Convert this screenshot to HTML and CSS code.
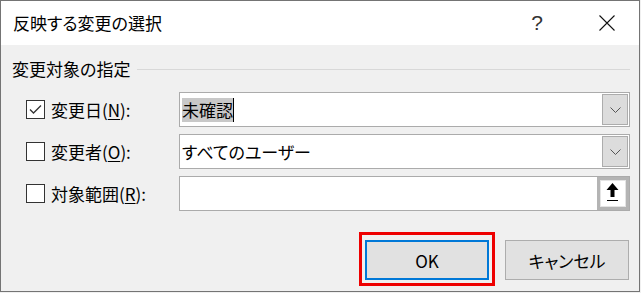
FILE: index.html
```html
<!DOCTYPE html>
<html lang="ja">
<head>
<meta charset="utf-8">
<title>反映する変更の選択</title>
<link rel="stylesheet" href="styles.css">
</head>
<body>
<div class="window">
  <header class="titlebar">
    <span class="title">反映する変更の選択</span>
    <span class="help">?</span>
    <span class="close">
      <svg width="16" height="16" viewBox="0 0 16 16"><path d="M0.5 0.5L15.5 15.5M15.5 0.5L0.5 15.5" stroke="#111" stroke-width="1.1" fill="none"/></svg>
    </span>
  </header>
  <main class="content">
    <div class="group-head">
      <span class="group-label">変更対象の指定</span>
      <span class="rule"></span>
    </div>
    <div class="fields">
      <div class="field">
        <label class="check">
          <span class="box"><svg width="17" height="17" viewBox="0 0 17 17"><path d="M3 8.5L6.5 12L14 4.5" stroke="#333" stroke-width="1.3" fill="none"/></svg></span>
          <span class="label-text">変更日(<u>N</u>):</span>
        </label>
        <div class="combo">
          <span class="value"><span class="sel">未確認</span><span class="caret"></span></span>
          <span class="drop"><svg width="11" height="6" viewBox="0 0 11 6"><path d="M0.5 0.5L5.5 5.5L10.5 0.5" stroke="#555" stroke-width="1" fill="none"/></svg></span>
        </div>
      </div>
      <div class="field">
        <label class="check">
          <span class="box"></span>
          <span class="label-text">変更者(<u>O</u>):</span>
        </label>
        <div class="combo">
          <span class="value">すべてのユーザー</span>
          <span class="drop"><svg width="11" height="6" viewBox="0 0 11 6"><path d="M0.5 0.5L5.5 5.5L10.5 0.5" stroke="#555" stroke-width="1" fill="none"/></svg></span>
        </div>
      </div>
      <div class="field">
        <label class="check">
          <span class="box"></span>
          <span class="label-text">対象範囲(<u>R</u>):</span>
        </label>
        <div class="combo">
          <span class="value"></span>
          <span class="pick"><svg width="24" height="25" viewBox="0 0 24 25"><path d="M11.5 2L17.5 9H13.5V16H9.5V9H5.5Z" fill="#000"/><rect x="6" y="19" width="11" height="1" fill="#000"/></svg></span>
        </div>
      </div>
    </div>
    <div class="actions">
      <span class="ok-wrap"><button class="btn ok">OK</button></span>
      <button class="btn">キャンセル</button>
    </div>
  </main>
</div>
</body>
</html>
```
FILE: styles.css
```css
* { box-sizing: border-box; }
body {
  margin: 0;
  background: #f0f0f0;
  font-family: "Noto Sans CJK JP", "Noto Sans", sans-serif;
  font-feature-settings: "palt";
  color: #000;
}
.window {
  width: 640px;
  height: 292px;
  border: 1px solid #747474;
  background: #f0f0f0;
  display: flex;
  flex-direction: column;
}
.titlebar {
  height: 44px;
  background: #fff;
  display: flex;
  align-items: center;
  padding-left: 12px;
  padding-right: 10px;
  flex: none;
}
.title { flex: 1; font-size: 17px; line-height: 24px; }
.help {
  width: 44px;
  text-align: center;
  font-size: 21px;
  line-height: 24px;
  font-family: "Liberation Sans", sans-serif;
  color: #333;
  margin-right: 26px;
}
.close {
  width: 44px;
  display: flex;
  justify-content: center;
}
.content {
  flex: 1;
  padding: 12px 9px 0 11px;
}
.group-head {
  height: 24px;
  display: flex;
  align-items: center;
  gap: 7px;
}
.group-label { font-size: 17px; line-height: 24px; }
.rule { flex: 1; height: 1px; background: #d8d8d8; }
.fields {
  margin-top: 11px;
  display: flex;
  flex-direction: column;
  gap: 7px;
}
.field {
  height: 35px;
  display: flex;
  align-items: center;
  padding-left: 14px;
}
.check {
  width: 153px;
  display: flex;
  align-items: center;
  gap: 6px;
}
.box {
  width: 19px;
  height: 19px;
  border: 1px solid #333;
  background: #fff;
  display: flex;
  align-items: center;
  justify-content: center;
}
.label-text { font-size: 17px; line-height: 24px; }
.label-text u { text-underline-offset: 2px; }
.combo {
  flex: 1;
  height: 35px;
  border: 1px solid #ababab;
  background: #fff;
  display: flex;
  align-items: center;
}
.value {
  flex: 1;
  padding-left: 2px;
  font-size: 17px;
  line-height: 24px;
  display: flex;
  align-items: center;
  height: 24px;
}
.sel { background: #c8c8c8; line-height: 24px; }
.caret { width: 1px; height: 24px; background: #000; }
.drop {
  width: 26px;
  height: 31px;
  margin-right: 1px;
  border: 1px solid #acacac;
  background: #dcdcdc;
  display: flex;
  align-items: center;
  justify-content: center;
}
.pick {
  width: 32px;
  height: 33px;
  border: 3px solid #b4b4b4;
  box-shadow: inset 0 0 0 1px #e4e4e4;
  background: #fff;
  display: flex;
  align-items: center;
  justify-content: center;
}
.actions {
  margin-top: 29px;
  display: flex;
  justify-content: flex-end;
  gap: 16px;
  padding-right: 1px;
}
.ok-wrap { position: relative; display: flex; }
.ok-wrap::after {
  content: "";
  position: absolute;
  left: -6px;
  right: -6px;
  top: -8px;
  bottom: -6px;
  border: 3px solid #ee0000;
}
.btn {
  width: 124px;
  height: 40px;
  border: 1px solid #adadad;
  background: #e1e1e1;
  font-family: "Noto Sans CJK JP", "Noto Sans", sans-serif;
  font-feature-settings: "palt";
  font-size: 17px;
  color: #000;
  padding: 0;
}
.btn.ok { border: 2px solid #0078d7; }
```
